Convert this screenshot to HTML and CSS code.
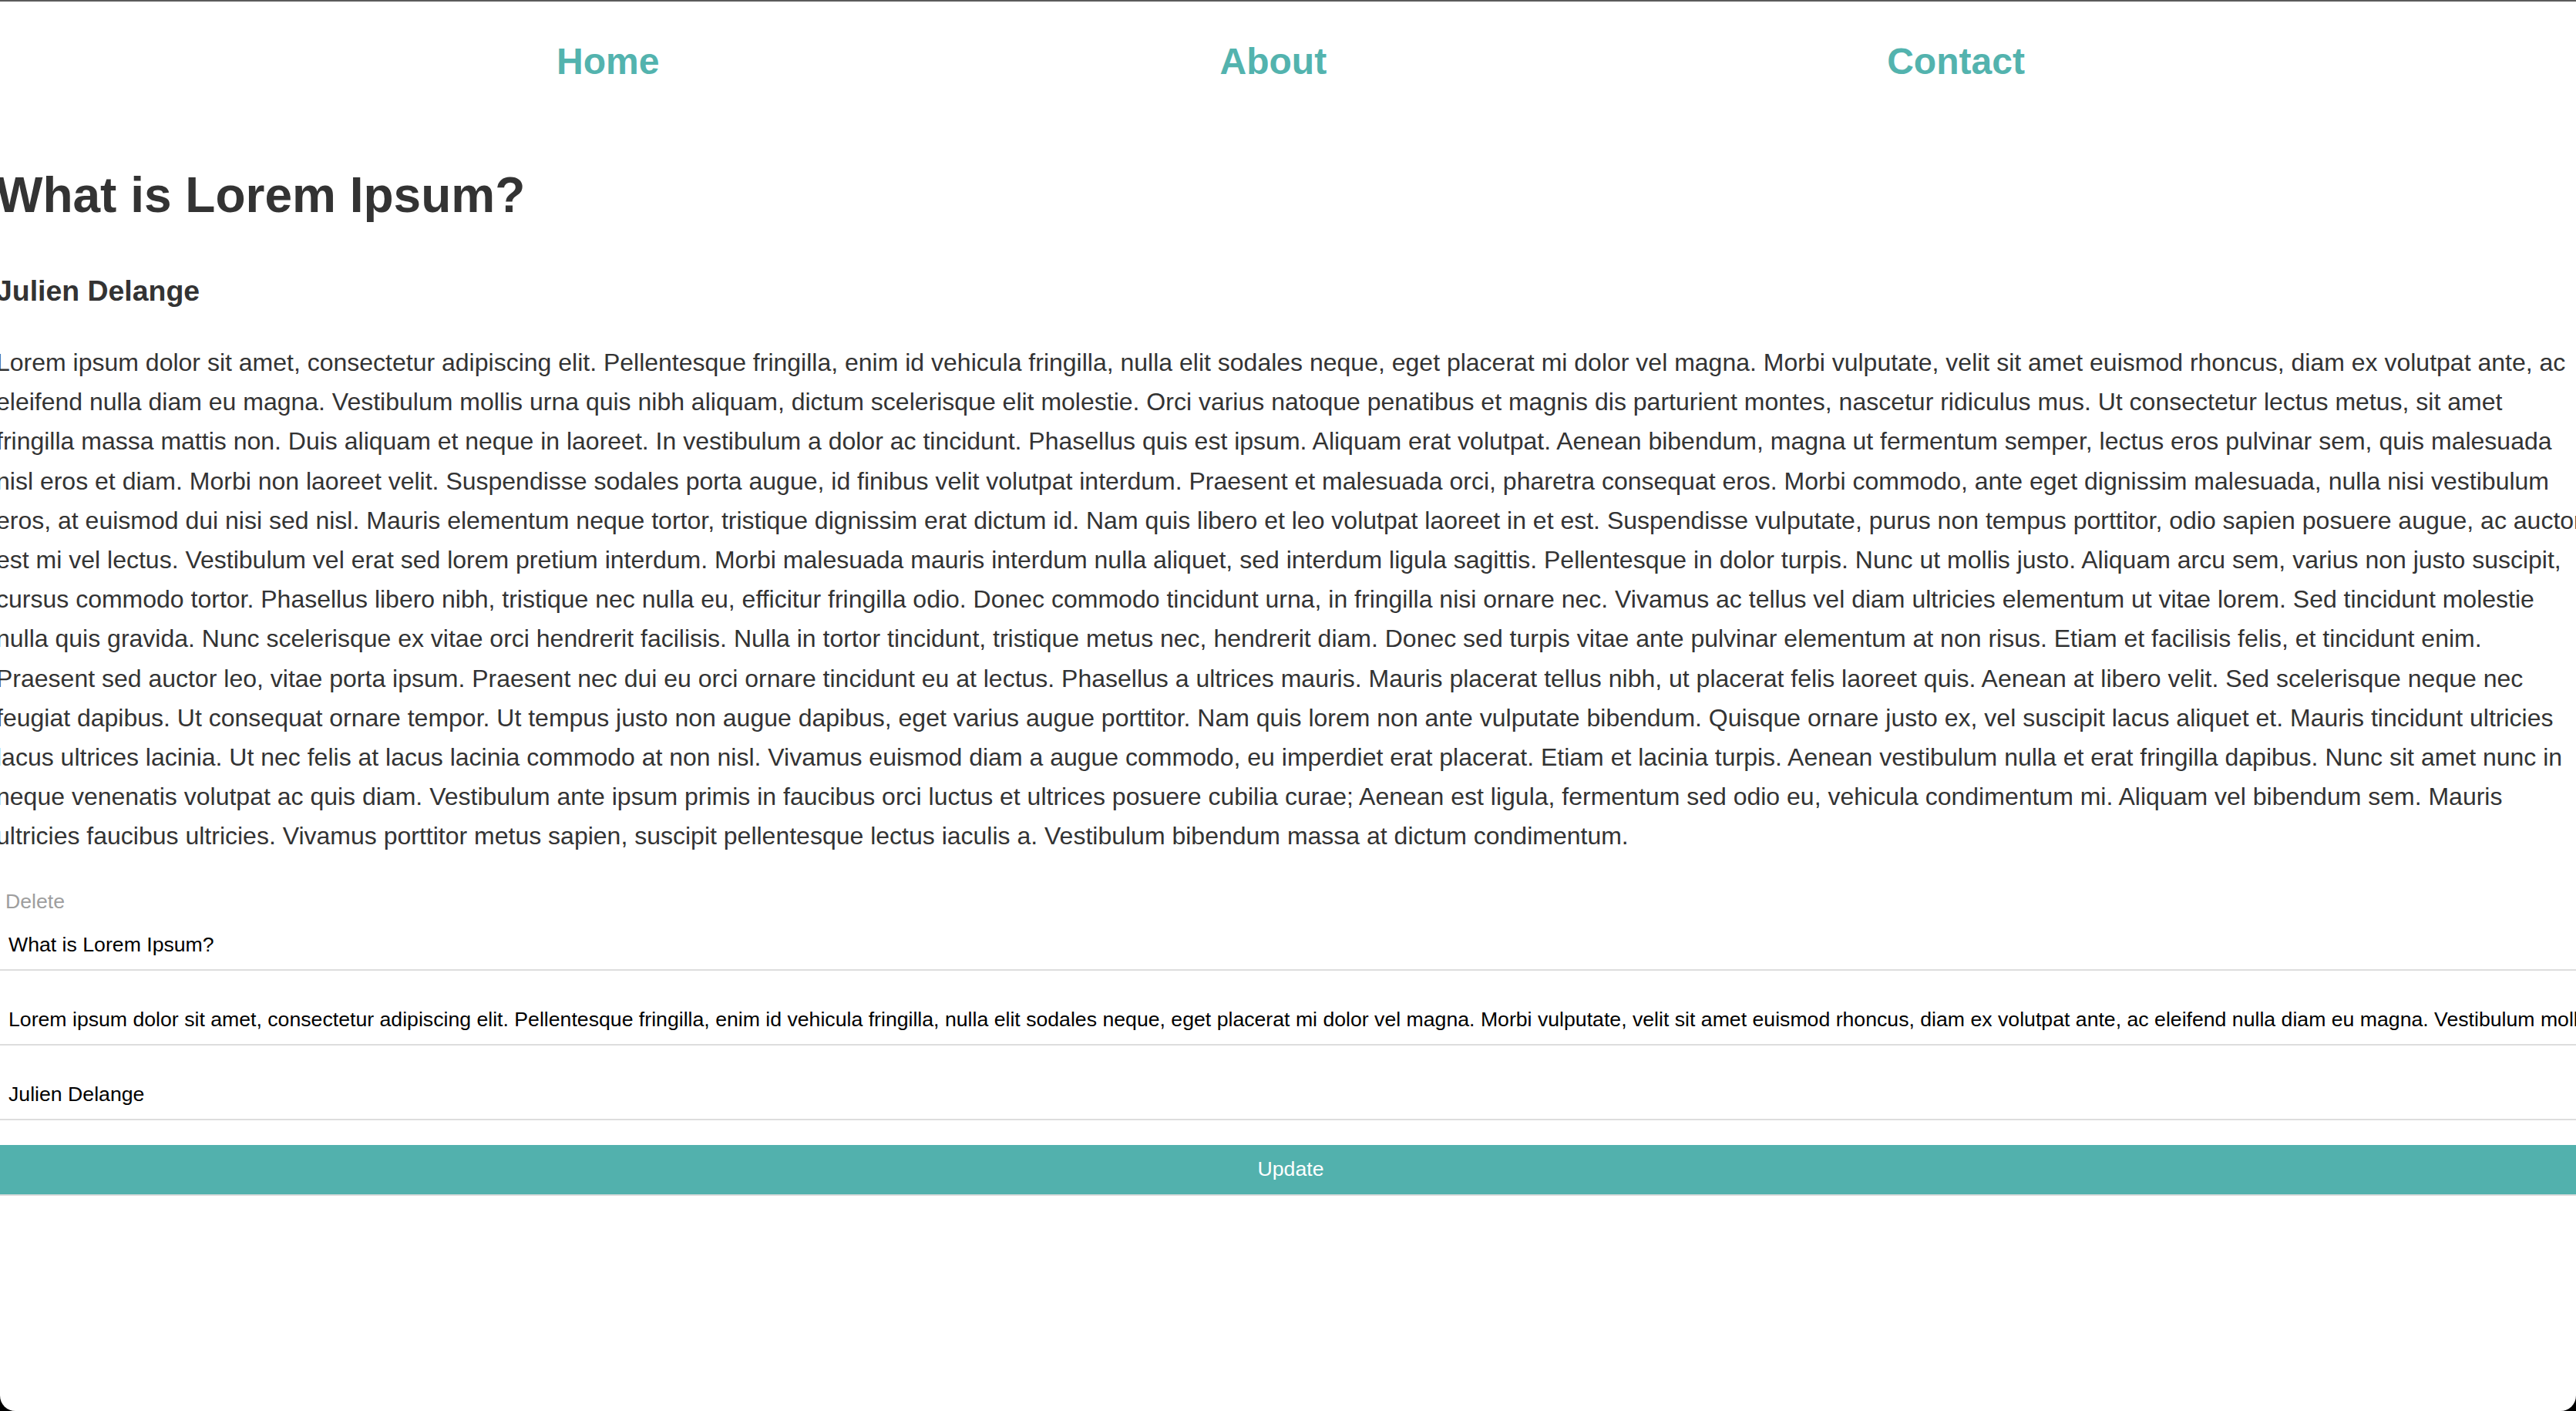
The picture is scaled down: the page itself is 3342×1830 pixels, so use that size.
FILE: index.html
```html
<!DOCTYPE html>
<html lang="en">
<head>
<meta charset="utf-8">
<title>What is Lorem Ipsum?</title>
<link rel="stylesheet" href="styles.css">
</head>
<body>
<div class="window">
  <div class="page">
    <nav class="nav">
      <a class="nav-link" href="#">Home</a>
      <a class="nav-link" href="#">About</a>
      <a class="nav-link" href="#">Contact</a>
    </nav>
    <article class="post">
      <h1 class="title">What is Lorem Ipsum?</h1>
      <h3 class="author">Julien Delange</h3>
      <p class="body-text">Lorem ipsum dolor sit amet, consectetur adipiscing elit. Pellentesque fringilla, enim id vehicula fringilla, nulla elit sodales neque, eget placerat mi dolor vel magna. Morbi vulputate, velit sit amet euismod rhoncus, diam ex volutpat ante, ac eleifend nulla diam eu magna. Vestibulum mollis urna quis nibh aliquam, dictum scelerisque elit molestie. Orci varius natoque penatibus et magnis dis parturient montes, nascetur ridiculus mus. Ut consectetur lectus metus, sit amet fringilla massa mattis non. Duis aliquam et neque in laoreet. In vestibulum a dolor ac tincidunt. Phasellus quis est ipsum. Aliquam erat volutpat. Aenean bibendum, magna ut fermentum semper, lectus eros pulvinar sem, quis malesuada nisl eros et diam. Morbi non laoreet velit. Suspendisse sodales porta augue, id finibus velit volutpat interdum. Praesent et malesuada orci, pharetra consequat eros. Morbi commodo, ante eget dignissim malesuada, nulla nisi vestibulum eros, at euismod dui nisi sed nisl. Mauris elementum neque tortor, tristique dignissim erat dictum id. Nam quis libero et leo volutpat laoreet in et est. Suspendisse vulputate, purus non tempus porttitor, odio sapien posuere augue, ac auctor est mi vel lectus. Vestibulum vel erat sed lorem pretium interdum. Morbi malesuada mauris interdum nulla aliquet, sed interdum ligula sagittis. Pellentesque in dolor turpis. Nunc ut mollis justo. Aliquam arcu sem, varius non justo suscipit, cursus commodo tortor. Phasellus libero nibh, tristique nec nulla eu, efficitur fringilla odio. Donec commodo tincidunt urna, in fringilla nisi ornare nec. Vivamus ac tellus vel diam ultricies elementum ut vitae lorem. Sed tincidunt molestie nulla quis gravida. Nunc scelerisque ex vitae orci hendrerit facilisis. Nulla in tortor tincidunt, tristique metus nec, hendrerit diam. Donec sed turpis vitae ante pulvinar elementum at non risus. Etiam et facilisis felis, et tincidunt enim. Praesent sed auctor leo, vitae porta ipsum. Praesent nec dui eu orci ornare tincidunt eu at lectus. Phasellus a ultrices mauris. Mauris placerat tellus nibh, ut placerat felis laoreet quis. Aenean at libero velit. Sed scelerisque neque nec feugiat dapibus. Ut consequat ornare tempor. Ut tempus justo non augue dapibus, eget varius augue porttitor. Nam quis lorem non ante vulputate bibendum. Quisque ornare justo ex, vel suscipit lacus aliquet et. Mauris tincidunt ultricies lacus ultrices lacinia. Ut nec felis at lacus lacinia commodo at non nisl. Vivamus euismod diam a augue commodo, eu imperdiet erat placerat. Etiam et lacinia turpis. Aenean vestibulum nulla et erat fringilla dapibus. Nunc sit amet nunc in neque venenatis volutpat ac quis diam. Vestibulum ante ipsum primis in faucibus orci luctus et ultrices posuere cubilia curae; Aenean est ligula, fermentum sed odio eu, vehicula condimentum mi. Aliquam vel bibendum sem. Mauris ultricies faucibus ultricies. Vivamus porttitor metus sapien, suscipit pellentesque lectus iaculis a. Vestibulum bibendum massa at dictum condimentum.</p>
    </article>
    <div class="editor">
      <button class="delete" type="button">Delete</button>
      <form class="form">
        <input class="field field-first" type="text" value="What is Lorem Ipsum?">
        <input class="field" type="text" value="Lorem ipsum dolor sit amet, consectetur adipiscing elit. Pellentesque fringilla, enim id vehicula fringilla, nulla elit sodales neque, eget placerat mi dolor vel magna. Morbi vulputate, velit sit amet euismod rhoncus, diam ex volutpat ante, ac eleifend nulla diam eu magna. Vestibulum mollis urna quis nibh aliquam, dictum scelerisque elit molestie.">
        <input class="field" type="text" value="Julien Delange">
        <button class="update" type="button">Update</button>
      </form>
    </div>
  </div>
</div>
</body>
</html>
```

FILE: styles.css
```css
html {
  background: #000;
}

body {
  margin: 0;
  font-family: "Liberation Sans", Arial, Helvetica, sans-serif;
}

.window {
  box-sizing: border-box;
  min-height: 100vh;
  background: #fff;
  border-top: 2px solid #5b5b5b;
  border-radius: 0 0 20px 20px;
  overflow: hidden;
}

.page {
  margin: 0 -12px 0 -5px;
}

.nav {
  display: flex;
  justify-content: space-evenly;
  padding: 50px 0 66px;
}

.nav-link {
  font-size: 48px;
  font-weight: bold;
  line-height: normal;
  color: #53b3ae;
  text-decoration: none;
}

.title {
  margin: 43px 0 0;
  font-size: 64px;
  font-weight: bold;
  line-height: normal;
  color: #333;
}

.author {
  margin: 66px 0 0;
  font-size: 37.44px;
  font-weight: bold;
  line-height: normal;
  color: #333;
}

.body-text {
  margin: 46px 0 0;
  font-size: 32px;
  line-height: 51.2px;
  color: #333;
}

.editor {
  margin-top: 41px;
}

.delete {
  display: block;
  margin: 0;
  padding: 2px 12px;
  border: none;
  background: none;
  font-family: "Liberation Sans", Arial, Helvetica, sans-serif;
  font-size: 26.67px;
  line-height: normal;
  color: #9e9e9e;
}

.form {
  display: block;
  margin: 0;
}

.field {
  display: block;
  box-sizing: content-box;
  width: 100%;
  margin: 32px 0 0;
  padding: 16px;
  border: none;
  border-bottom: 2px solid #dddddd;
  background: #fff;
  font-family: "Liberation Sans", Arial, Helvetica, sans-serif;
  font-size: 26.67px;
  line-height: normal;
  color: #000;
  outline: none;
}

.field-first {
  margin-top: 7px;
}

.update {
  display: block;
  box-sizing: border-box;
  width: 100%;
  margin: 32px 0 0;
  padding: 16.5px;
  border: none;
  border-bottom: 2px solid #dddddd;
  background: #52b1ad;
  font-family: "Liberation Sans", Arial, Helvetica, sans-serif;
  font-size: 26.67px;
  line-height: normal;
  color: #fff;
}
```
